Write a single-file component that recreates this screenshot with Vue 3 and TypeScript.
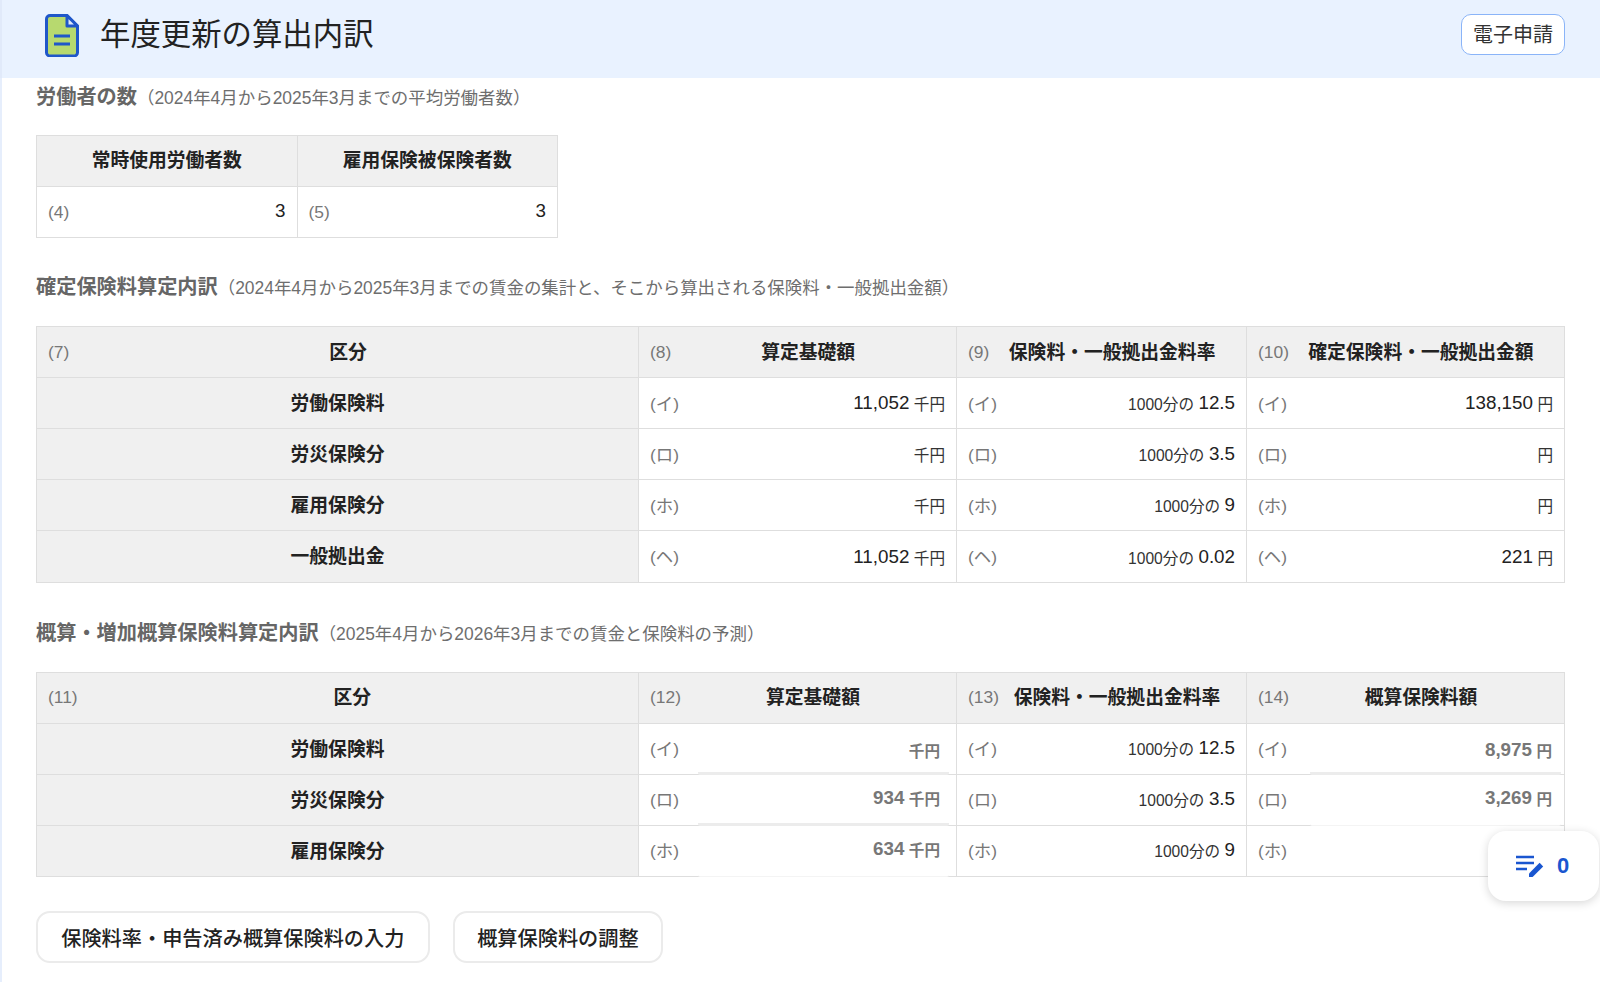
<script setup lang="ts">
interface Row {
    name: string;
    kana: string;
    base?: string;
    rate: string;
    amount?: string;
    baseEmph?: string;
    amountEmph?: string;
}

// 確定保険料
const confirmedRows: Row[] = [
    { name: "労働保険料", kana: "イ", base: "11,052", rate: "12.5", amount: "138,150" },
    { name: "労災保険分", kana: "ロ", rate: "3.5" },
    { name: "雇用保険分", kana: "ホ", rate: "9" },
    { name: "一般拠出金", kana: "ヘ", base: "11,052", rate: "0.02", amount: "221" }
];

// 概算保険料
const estimatedRows: Row[] = [
    { name: "労働保険料", kana: "イ", rate: "12.5", amount: "8,975", baseEmph: "thick", amountEmph: "thick" },
    { name: "労災保険分", kana: "ロ", base: "934", rate: "3.5", amount: "3,269", baseEmph: "thick raised", amountEmph: "thin raised" },
    { name: "雇用保険分", kana: "ホ", base: "634", rate: "9", baseEmph: "thin raised" }
];
</script>

<template>
    <div class="page">
        <header class="top-bar">
            <svg class="doc-icon" viewBox="0 0 34 43" width="34" height="43">
                <path
                    d="M5 1.5h17l10.5 10.5v26.5a3.5 3.5 0 0 1-3.5 3.5H5a3.5 3.5 0 0 1-3.5-3.5V5A3.5 3.5 0 0 1 5 1.5z"
                    fill="#b7d96f"
                    stroke="#1f57c9"
                    stroke-width="3"
                    stroke-linejoin="round"
                />
                <path d="M22 1.5V12h10.5z" fill="#dfe9fb" stroke="#1f57c9" stroke-width="3" stroke-linejoin="round" />
                <path d="M9 22h16M9 30h16" stroke="#1f57c9" stroke-width="3" fill="none" />
            </svg>
            <h1 class="title">年度更新の算出内訳</h1>
            <button class="apply-btn">電子申請</button>
        </header>

        <main class="content">
            <h2 class="section-title first">労働者の数<span class="section-sub">（2024年4月から2025年3月までの平均労働者数）</span></h2>
            <table class="grid workers">
                <tbody>
                    <tr>
                        <th><span class="head-title">常時使用労働者数</span></th>
                        <th><span class="head-title">雇用保険被保険者数</span></th>
                    </tr>
                    <tr>
                        <td>
                            <div class="cell"><span class="mark">(4)</span><span class="value">3</span></div>
                        </td>
                        <td>
                            <div class="cell"><span class="mark">(5)</span><span class="value">3</span></div>
                        </td>
                    </tr>
                </tbody>
            </table>

            <h2 class="section-title second">確定保険料算定内訳<span class="section-sub">（2024年4月から2025年3月までの賃金の集計と、そこから算出される保険料・一般拠出金額）</span></h2>
            <table class="grid confirmed">
                <colgroup>
                    <col class="col-a" />
                    <col class="col-b" />
                    <col class="col-c" />
                    <col class="col-d" />
                </colgroup>
                <tbody>
                    <tr>
                        <th><div class="cell"><span class="mark">(7)</span><span class="head-title grow">区分</span></div></th>
                        <th><div class="cell"><span class="mark">(8)</span><span class="head-title grow">算定基礎額</span></div></th>
                        <th><div class="cell"><span class="mark">(9)</span><span class="head-title grow">保険料・一般拠出金料率</span></div></th>
                        <th><div class="cell"><span class="mark">(10)</span><span class="head-title grow">確定保険料・一般拠出金額</span></div></th>
                    </tr>
                    <tr v-for="row in confirmedRows" :key="row.name">
                        <th><span class="head-title">{{ row.name }}</span></th>
                        <td>
                            <div class="cell">
                                <span class="mark">({{ row.kana }})</span>
                                <span><span class="value">{{ row.base }}</span> <span class="unit">千円</span></span>
                            </div>
                        </td>
                        <td>
                            <div class="cell">
                                <span class="mark">({{ row.kana }})</span>
                                <span><span class="unit">1000分の</span> <span class="value">{{ row.rate }}</span></span>
                            </div>
                        </td>
                        <td>
                            <div class="cell">
                                <span class="mark">({{ row.kana }})</span>
                                <span><span class="value">{{ row.amount }}</span> <span class="unit">円</span></span>
                            </div>
                        </td>
                    </tr>
                </tbody>
            </table>

            <h2 class="section-title third">概算・増加概算保険料算定内訳<span class="section-sub">（2025年4月から2026年3月までの賃金と保険料の予測）</span></h2>
            <table class="grid estimated">
                <colgroup>
                    <col class="col-a" />
                    <col class="col-b" />
                    <col class="col-c" />
                    <col class="col-d" />
                </colgroup>
                <tbody>
                    <tr>
                        <th><div class="cell"><span class="mark">(11)</span><span class="head-title grow">区分</span></div></th>
                        <th><div class="cell"><span class="mark">(12)</span><span class="head-title grow">算定基礎額</span></div></th>
                        <th><div class="cell"><span class="mark">(13)</span><span class="head-title grow">保険料・一般拠出金料率</span></div></th>
                        <th><div class="cell"><span class="mark">(14)</span><span class="head-title grow">概算保険料額</span></div></th>
                    </tr>
                    <tr v-for="row in estimatedRows" :key="row.name">
                        <th><span class="head-title">{{ row.name }}</span></th>
                        <td>
                            <div class="cell input-cell base-input">
                                <span class="mark">({{ row.kana }})</span>
                                <span class="input-box" :class="row.baseEmph">
                                    <span class="value">{{ row.base }}</span> <span class="unit">千円</span>
                                </span>
                            </div>
                        </td>
                        <td>
                            <div class="cell">
                                <span class="mark">({{ row.kana }})</span>
                                <span class="rate-text"><span class="unit">1000分の</span> <span class="value">{{ row.rate }}</span></span>
                            </div>
                        </td>
                        <td>
                            <div class="cell input-cell">
                                <span class="mark">({{ row.kana }})</span>
                                <span v-if="row.amount" class="input-box" :class="row.amountEmph">
                                    <span class="value">{{ row.amount }}</span> <span class="unit">円</span>
                                </span>
                            </div>
                        </td>
                    </tr>
                </tbody>
            </table>

            <div class="actions">
                <button class="action-btn">保険料率・申告済み概算保険料の入力</button>
                <button class="action-btn">概算保険料の調整</button>
            </div>
        </main>

        <div class="memo-float">
            <svg viewBox="0 0 30 24" width="30" height="24">
                <path d="M1 3h18M1 9h18M1 15h11" stroke="#1a56d0" stroke-width="2.4" fill="none" />
                <path d="M14 23v-3.6L24.6 8.8l3.6 3.6L17.6 23z" fill="#1a56d0" />
            </svg>
            <span class="memo-count">0</span>
        </div>
    </div>
</template>

<style scoped>
.page {
    position: relative;
    min-height: 982px;
    box-sizing: border-box;
    overflow: hidden;
    background: #fff;
    color: #1f1f1f;
    font-family: "Liberation Sans", "Noto Sans CJK JP", sans-serif;
}

.top-bar {
    display: flex;
    align-items: center;
    height: 78px;
    box-sizing: border-box;
    padding: 0 35px 0 43px;
    background: #e9f2ff;
    border-left: 2px solid #e1eafa;
}

.doc-icon {
    flex: none;
    margin-top: -7px;
}

.title {
    flex: 1;
    margin: -15px 0 0 21px;
    font-size: 30.4px;
    font-weight: 400;
    color: #222;
}

.apply-btn {
    width: 104px;
    height: 41px;
    margin-top: -9px;
    padding: 0 0 2px;
    background: #fff;
    border: 1px solid #8ab4f8;
    border-radius: 10px;
    color: #333;
    font: 400 20px "Liberation Sans", "Noto Sans CJK JP", sans-serif;
}

.content {
    padding: 0 35px 19px 34px;
    border-left: 2px solid #e6eefc;
}

.section-title {
    height: 38px;
    margin: 32px 0 20px;
    font-size: 20.2px;
    font-weight: 700;
    line-height: 38px;
    color: #666;
    white-space: nowrap;
}

.section-title.first {
    margin-top: 0;
    margin-bottom: 19px;
}

.section-title.second {
    margin-top: 30px;
}

.section-title.third {
    margin-top: 31px;
}

.section-sub {
    font-size: 17.45px;
    font-weight: 400;
    color: #6e6e6e;
}

.grid {
    width: 100%;
    table-layout: fixed;
    border-collapse: collapse;
}

.grid.workers {
    width: 522px;
}

.col-a {
    width: 602px;
}

.col-b {
    width: 318px;
}

.col-c {
    width: 290px;
}

.grid tr {
    height: 51px;
}

.grid.confirmed tr:last-child {
    height: 52px;
}

.grid th,
.grid td {
    padding: 0;
    border: 1px solid #dedede;
    box-sizing: border-box;
}

.grid th {
    background: #f0f0f0;
}

.cell {
    display: flex;
    align-items: center;
    justify-content: space-between;
    height: 50px;
    padding: 0 11px;
}

.mark {
    flex: none;
    font-size: 17.4px;
    font-weight: 400;
    color: #777;
}

td .mark {
    margin-bottom: 2px;
}

.estimated td .mark {
    margin-bottom: 4px;
}

.workers td .mark {
    margin-bottom: 0;
}

.workers td .value {
    margin-bottom: 2px;
}

.estimated tr:first-child .cell {
    box-sizing: border-box;
    padding-bottom: 2px;
}

.rate-text {
    margin-bottom: 2px;
}

.head-title {
    display: block;
    padding-bottom: 4px;
    font-size: 18.8px;
    font-weight: 700;
    color: #222;
}

.workers .head-title {
    padding-bottom: 6px;
}

.head-title.grow {
    flex: 1;
    text-align: center;
}

.value {
    font-size: 18.8px;
    color: #222;
    vertical-align: 1px;
}

.unit {
    font-size: 15.6px;
    color: #333;
}

.input-cell {
    padding-right: 3px;
}

.base-input {
    padding-right: 7px;
}

.input-box {
    display: block;
    flex: none;
    width: 251px;
    height: 50px;
    margin-top: 1px;
    padding-right: 9px;
    box-sizing: border-box;
    line-height: 50px;
    text-align: right;
    border-bottom: 1px solid #f4f4f4;
    border-radius: 2px;
}

.input-box.thick {
    border-bottom: 3px solid #ececec;
}

.input-box.raised {
    line-height: 44px;
}

.input-box .value,
.input-box .unit {
    color: #777;
    font-weight: 700;
}

.actions {
    display: flex;
    gap: 23px;
    margin-top: 34px;
}

.action-btn {
    height: 52px;
    padding: 0 22.6px;
    background: #fff;
    border: 2px solid #ebebeb;
    border-radius: 14px;
    color: #222;
    font: 500 20.2px "Liberation Sans", "Noto Sans CJK JP", sans-serif;
}

.action-btn:first-child {
    padding: 0 23.2px;
}

.memo-float {
    position: absolute;
    top: 831px;
    right: 1px;
    display: flex;
    align-items: center;
    gap: 12px;
    width: 111px;
    height: 70px;
    box-sizing: border-box;
    padding: 0 0 0 27px;
    background: #fff;
    border-radius: 18px;
    box-shadow: 0 2px 10px rgba(0, 0, 0, 0.16);
}

.memo-count {
    font-size: 22px;
    font-weight: 700;
    color: #1a56d0;
}
</style>
